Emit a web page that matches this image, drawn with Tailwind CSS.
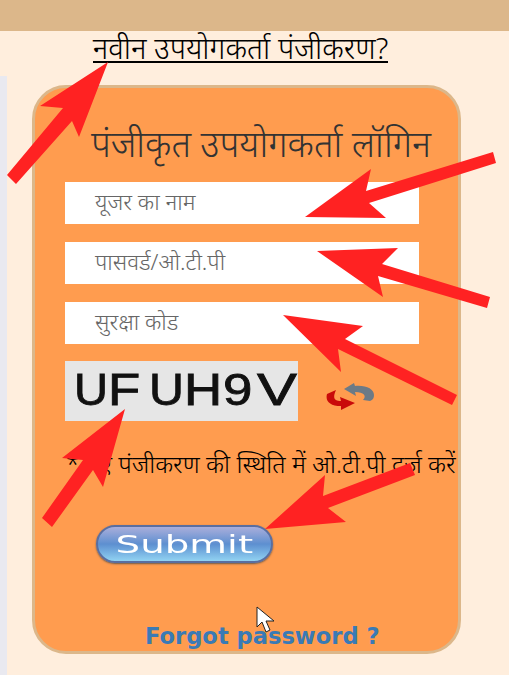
<!DOCTYPE html>
<html lang="hi">
<head>
<meta charset="utf-8">
<script src="https://cdn.jsdelivr.net/npm/@tailwindcss/browser@4"></script>
</head>
<body class="relative h-[675px] w-[509px] overflow-hidden bg-[#ffeedd] font-['Noto_Sans','Liberation_Sans',sans-serif]">
  <div class="h-[31px] bg-[#dcb78a]"></div>
  <div class="flex h-[54px] justify-center pr-[28px]">
    <a class="-mt-[1px] h-[33px] border-b-2 border-black text-[29.7px] leading-[35px] font-light whitespace-nowrap text-black">नवीन उपयोगकर्ता पंजीकरण?</a>
  </div>
  <div class="flex">
    <div class="-mt-[9px] h-[600px] w-[7px] bg-[#e9e9f0]"></div>
    <div class="ml-[25px] flex h-[569px] w-[429px] flex-col overflow-hidden rounded-[34px] border-[3px] border-[#dcb78a] bg-[#ff9c4f] pl-[30px]">
      <h1 class="mt-[33px] h-[61px] pl-[26px] text-[36.3px] leading-[44px] font-light whitespace-nowrap text-[#333333]">पंजीकृत उपयोगकर्ता लॉगिन</h1>
      <div class="flex w-[354px] flex-col gap-[18px]">
        <div class="flex h-[42px] items-center bg-white pb-[2px] pl-[30px] text-[22.5px] font-light text-[#666666]">यूजर का नाम</div>
        <div class="flex h-[42px] items-center bg-white pb-[2px] pl-[30px] text-[22.5px] font-light text-[#666666]">पासवर्ड/ओ.टी.पी</div>
        <div class="flex h-[42px] items-center bg-white pb-[2px] pl-[30px] text-[22.5px] font-light text-[#666666]">सुरक्षा कोड</div>
      </div>
      <div class="mt-[17px] flex items-start">
        <div class="flex h-[60px] w-[233px] items-center overflow-hidden bg-[#e6e6e6] pb-[3px] pl-[9px] font-['Liberation_Sans',sans-serif] text-[44px] leading-none whitespace-nowrap text-[#111111] [-webkit-text-stroke:0.8px_#111111] blur-[0.5px]">
          <span class="inline-block w-[34px] origin-left scale-x-[1.07]">U</span><span class="inline-block w-[41px] origin-left scale-x-[1.2]">F</span><span class="inline-block w-[35px] origin-left scale-x-[1.1]">U</span><span class="inline-block w-[40px] origin-left scale-x-[1.2]">H</span><span class="inline-block w-[34px] origin-left scale-x-[1.2]">9</span><span class="inline-block w-[41px] origin-left scale-x-[1.36]">V</span>
        </div>
        <svg class="mt-[22px] ml-[28px]" width="50" height="28" viewBox="0 0 50 28">
          <path d="M18 6 L28 0 L29 3 C40 2 48 6 48 12 C48 15 47 17 44 18 L37 17 C41 13 38 9 29 9 L30 13 Z" fill="#6d7a86"/>
          <path d="M10 7 L1 11 C-1 18 4 23 15 23 L15 27 L29 20 L14 14 L15 18 C9 18 6 16 10 7 Z" fill="#c90a0a"/>
        </svg>
      </div>
      <p class="mt-[28px] ml-[1px] text-[24.7px] leading-[30px] font-light whitespace-nowrap text-black">* नए पंजीकरण की स्थिति में ओ.टी.पी दर्ज करें</p>
      <button class="ml-[31px] mt-[46px] flex h-[38px] w-[177px] items-center justify-center rounded-full border-2 border-[#5a6ea0] bg-gradient-to-b from-[#a9aedb] via-[#5d8fd0] to-[#92d3f2] shadow-[0_1px_2px_#6b5a4a]">
        <span class="scale-x-[1.55] font-['DejaVu_Sans',sans-serif] text-[25px] leading-none text-white blur-[0.3px]">Submit</span>
      </button>
      <a class="mt-[59px] ml-[80px] font-['DejaVu_Sans',sans-serif] text-[22.6px] leading-[28px] font-bold whitespace-nowrap text-[#3a7ab5]">Forgot password ?</a>
    </div>
  </div>
  <svg class="pointer-events-none absolute top-0 left-0" width="509" height="675" viewBox="0 0 509 675">
    <g fill="#ff2222">
      <polygon points="108,62 79,137 72,121 16,184 7,175 63,108 40,106"/>
      <polygon points="305,217 371,169 366,191 493,152 496,163 369,203 386,218"/>
      <polygon points="317,251 398,248 382,264 490,297 487,308 378,276 383,297"/>
      <polygon points="283,315 363,326 345,339 457,395 452,405 338,349 341,372"/>
      <polygon points="125,409 103,487 93,470 52,527 42,518 83,460 62,458"/>
      <polygon points="265,529 325,475 323,496 410,463 415,475 328,508 346,522"/>
    </g>
    <path d="M257 607 L257 627 L262 622 L266 632 L270 630 L266 621 L274 621 Z" fill="#ffffff" stroke="#222222" stroke-width="1"/>
  </svg>
</body>
</html>
